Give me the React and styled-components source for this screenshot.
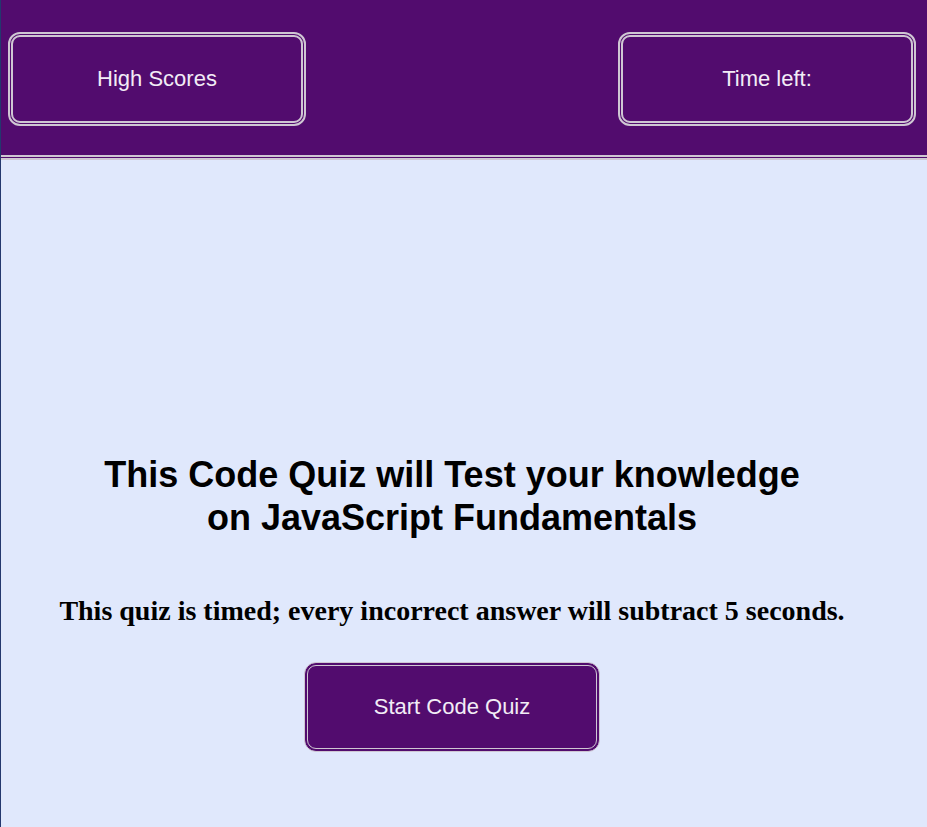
import React from "react";
import styled, { createGlobalStyle } from "styled-components";

const Global = createGlobalStyle`
  html, body {
    margin: 0;
    padding: 0;
    background: #e0e8fc;
  }
  body {
    border-left: 1px solid #24386e;
    min-height: 827px;
    box-sizing: border-box;
  }
`;

const Header = styled.header`
  display: flex;
  justify-content: space-between;
  align-items: flex-start;
  background: #520c6e;
  padding: 32px 11px 29px 7px;
  border-bottom: 5px double #cfc7d3;
`;

const Button = styled.button`
  box-sizing: border-box;
  width: ${(p) => p.$w}px;
  height: ${(p) => p.$h}px;
  background: #520c6e;
  color: #f2ecf6;
  font-family: "Liberation Sans", Arial, sans-serif;
  font-size: 22px;
  border: ${(p) => p.$bw}px double #cfc7d3;
  border-radius: 12px;
  cursor: pointer;
  padding: 0;
`;

const Main = styled.main`
  display: flex;
  flex-direction: column;
  align-items: center;
  padding: 0 24px 0 0;
`;

const Title = styled.h1`
  margin: 293px 0 0;
  font-family: "Liberation Sans", Arial, sans-serif;
  font-weight: bold;
  font-size: 36px;
  line-height: 43px;
  text-align: center;
  color: #000;
  max-width: 720px;
`;

const Subtitle = styled.p`
  margin: 56px 0 0;
  font-family: "Liberation Serif", "Times New Roman", serif;
  font-weight: bold;
  font-size: 28px;
  line-height: 32px;
  color: #000;
  text-align: center;
`;

const StartRow = styled.div`
  display: flex;
  margin-top: 35px;
`;

export default function App() {
  return (
    <>
      <Global />
      <Header>
        <Button $w={298} $h={94} $bw={5}>High Scores</Button>
        <Button $w={298} $h={94} $bw={5}>Time left:</Button>
      </Header>
      <Main>
        <Title>
          This Code Quiz will Test your knowledge on JavaScript Fundamentals
        </Title>
        <Subtitle>
          This quiz is timed; every incorrect answer will subtract 5 seconds.
        </Subtitle>
        <StartRow>
          <Button $w={296} $h={90} $bw={4}>Start Code Quiz</Button>
        </StartRow>
      </Main>
    </>
  );
}
